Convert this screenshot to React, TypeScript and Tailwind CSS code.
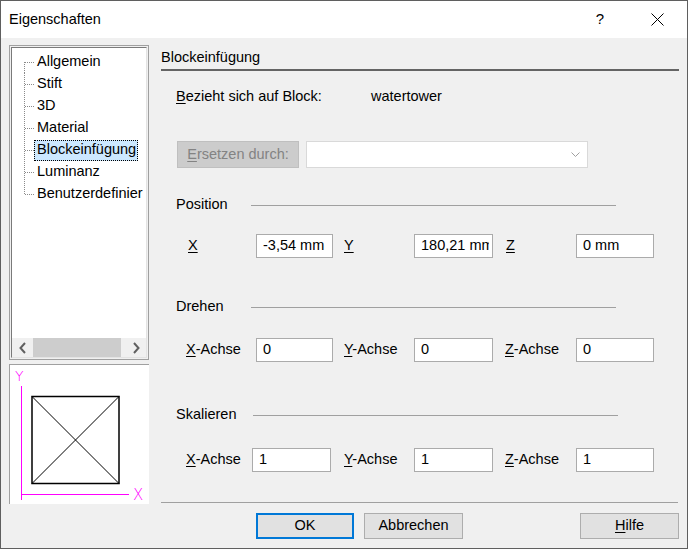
import React from 'react';

const treeItems = ['Allgemein', 'Stift', '3D', 'Material', 'Blockeinfügung', 'Luminanz', 'Benutzerdefinier'];

const TreeConnector = ({ first, last }: { first: boolean; last: boolean }) => (
  <svg width="11" height="22" className="shrink-0">
    <line x1="0.5" y1={first ? 11 : 0} x2="0.5" y2={last ? 11 : 22} stroke="#8a8a8a" strokeDasharray="1 1" />
    <line x1="1" y1="11.5" x2="11" y2="11.5" stroke="#8a8a8a" strokeDasharray="1 1" />
  </svg>
);

const Key = ({ k, rest }: { k: string; rest?: string }) => (
  <span>
    <u className="underline-offset-2">{k}</u>
    {rest}
  </span>
);

const Field = ({ value, w }: { value: string; w: string }) => (
  <div className={`${w} h-full bg-white border border-[#ababab] flex items-center pl-[6px] pr-[3px]`}>
    <div className="flex-1 overflow-hidden whitespace-nowrap">{value}</div>
  </div>
);

const SectionHead = ({ title, labelW }: { title: string; labelW: string }) => (
  <div className="flex items-center h-[20px] pl-[15px]">
    <div className={labelW}>{title}</div>
    <div className="w-[365px] h-px bg-[#a0a0a0]" />
  </div>
);

const Chevron = ({ dir }: { dir: 'l' | 'r' }) => (
  <svg width="8" height="12">
    <polyline
      points={dir === 'l' ? '6,1 1.5,6 6,11' : '2,1 6.5,6 2,11'}
      fill="none"
      stroke="#606060"
      strokeWidth="2"
    />
  </svg>
);

export default function App() {
  return (
    <div className="w-[688px] h-[549px] border border-[#5f5f5f] bg-[#f0f0f0] flex flex-col text-[14.5px] text-black font-['Liberation_Sans',Arial,sans-serif] overflow-hidden">
      {/* title bar */}
      <div className="h-[37px] bg-white flex items-center shrink-0">
        <div className="pl-[8px] text-[14.5px]">Eigenschaften</div>
        <div className="ml-auto w-[46px] flex justify-center text-[15px]">?</div>
        <div className="ml-[11px] w-[46px] mr-[7px] flex justify-center">
          <svg width="13" height="13">
            <line x1="0.5" y1="0.5" x2="12.5" y2="12.5" stroke="#000" />
            <line x1="12.5" y1="0.5" x2="0.5" y2="12.5" stroke="#000" />
          </svg>
        </div>
      </div>

      <div className="flex-1 flex">
        {/* left column */}
        <div className="pl-[8px] pt-[7px] w-[148px] shrink-0 flex flex-col">
          <div className="h-[315px] w-[140px] border border-[#a0a0a0] p-px">
            <div className="h-full border-l border-t border-[#7a7a7a] border-r border-b border-r-[#e3e3e3] border-b-[#e3e3e3] bg-white flex flex-col">
              <div className="flex-1 overflow-hidden pt-[3px]">
                {treeItems.map((it, i) => (
                  <div key={it} className="h-[22px] flex items-center pl-[12px] whitespace-nowrap">
                    <TreeConnector first={i === 0} last={i === treeItems.length - 1} />
                    {it === 'Blockeinfügung' ? (
                      <span className="h-[21px] flex items-center bg-[#cce8ff] border border-dotted border-black pl-[2px] pr-[1px] -ml-[1px]">
                        {it}
                      </span>
                    ) : (
                      <span className="pl-[2px]">{it}</span>
                    )}
                  </div>
                ))}
              </div>
              <div className="h-[19px] bg-[#f0f0f0] flex items-stretch">
                <div className="w-[21px] flex items-center justify-center">
                  <Chevron dir="l" />
                </div>
                <div className="w-[88px] bg-[#cdcdcd]" />
                <div className="flex-1" />
                <div className="w-[21px] flex items-center justify-center">
                  <Chevron dir="r" />
                </div>
              </div>
            </div>
          </div>

          <div className="mt-[4px] w-[140px] h-[140px] bg-white border-l border-t border-[#a0a0a0]">
            <svg width="139" height="139" className="block">
              <rect x="22" y="31.5" width="87" height="87" fill="none" stroke="#000" strokeWidth="1.5" />
              <line x1="22" y1="31.5" x2="109" y2="118.5" stroke="#000" />
              <line x1="109" y1="31.5" x2="22" y2="118.5" stroke="#000" />
              <line x1="11.5" y1="21" x2="11.5" y2="135" stroke="#ff00ff" />
              <line x1="11" y1="129.5" x2="119" y2="129.5" stroke="#ff00ff" />
              <text x="5" y="16" fill="#ff00ff" fontSize="14" fontWeight="200" fontFamily="DejaVu Sans">Y</text>
              <text x="123" y="135" fill="#ff00ff" fontSize="15" fontWeight="200" fontFamily="DejaVu Sans">X</text>
            </svg>
          </div>
        </div>

        {/* right panel */}
        <div className="ml-[12px] w-[518px] flex flex-col">
          <div className="mt-[9px] h-[20px] leading-[20px]">Blockeinfügung</div>
          <div className="mt-[2px] h-[2px] bg-[#646464]" />

          <div className="mt-[16px] h-[20px] flex items-center pl-[15px]">
            <div className="w-[195px]">
              <Key k="B" rest="ezieht sich auf Block:" />
            </div>
            <div>watertower</div>
          </div>

          <div className="mt-[34px] h-[27px] flex pl-[16px]">
            <div className="w-[122px] h-full bg-[#cccccc] border border-[#bfbfbf] text-[#838383] flex items-center justify-center">
              <Key k="E" rest="rsetzen durch:" />
            </div>
            <div className="ml-[7px] w-[282px] h-full bg-white border border-[#d9d9d9] flex items-center justify-end pr-[7px]">
              <svg width="9" height="6">
                <polyline points="0.5,0.5 4.5,4.5 8.5,0.5" fill="none" stroke="#a0a0a0" />
              </svg>
            </div>
          </div>

          <div className="mt-[27px]">
            <SectionHead title="Position" labelW="w-[75px]" />
          </div>
          <div className="mt-[19px] h-[24px] flex items-center pl-[15px]">
            <div className="w-[80px] pl-[12px]"><Key k="X" /></div>
            <Field value="-3,54 mm" w="w-[77px]" />
            <div className="w-[81px] pl-[11px]"><Key k="Y" /></div>
            <Field value="180,21 mm" w="w-[79px]" />
            <div className="w-[83px] pl-[13px]"><Key k="Z" /></div>
            <Field value="0 mm" w="w-[78px]" />
          </div>

          <div className="mt-[39px]">
            <SectionHead title="Drehen" labelW="w-[75px]" />
          </div>
          <div className="mt-[21px] h-[24px] flex items-center pl-[15px]">
            <div className="w-[80px] pl-[10px]"><Key k="X" rest="-Achse" /></div>
            <Field value="0" w="w-[77px]" />
            <div className="w-[81px] pl-[11px]"><Key k="Y" rest="-Achse" /></div>
            <Field value="0" w="w-[79px]" />
            <div className="w-[83px] pl-[12px]"><Key k="Z" rest="-Achse" /></div>
            <Field value="0" w="w-[78px]" />
          </div>

          <div className="mt-[43px]">
            <SectionHead title="Skalieren" labelW="w-[77px]" />
          </div>
          <div className="mt-[23px] h-[24px] flex items-center pl-[15px]">
            <div className="w-[76px] pl-[10px]"><Key k="X" rest="-Achse" /></div>
            <Field value="1" w="w-[79px]" />
            <div className="w-[83px] pl-[13px]"><Key k="Y" rest="-Achse" /></div>
            <Field value="1" w="w-[79px]" />
            <div className="w-[83px] pl-[12px]"><Key k="Z" rest="-Achse" /></div>
            <Field value="1" w="w-[78px]" />
          </div>

          <div className="mt-[30px] h-px w-[517px] bg-[#a0a0a0]" />

          <div className="mt-[10px] h-[26px] flex">
            <div className="ml-[95px] w-[98px] h-full bg-[#e1e1e1] border-2 border-[#0078d7] flex items-center justify-center">OK</div>
            <div className="ml-[10px] w-[99px] h-full bg-[#e1e1e1] border border-[#adadad] flex items-center justify-center">Abbrechen</div>
            <div className="ml-[117px] w-[99px] h-full bg-[#e1e1e1] border border-[#adadad] flex items-center justify-center">
              <Key k="H" rest="ilfe" />
            </div>
          </div>
        </div>
      </div>
    </div>
  );
}
